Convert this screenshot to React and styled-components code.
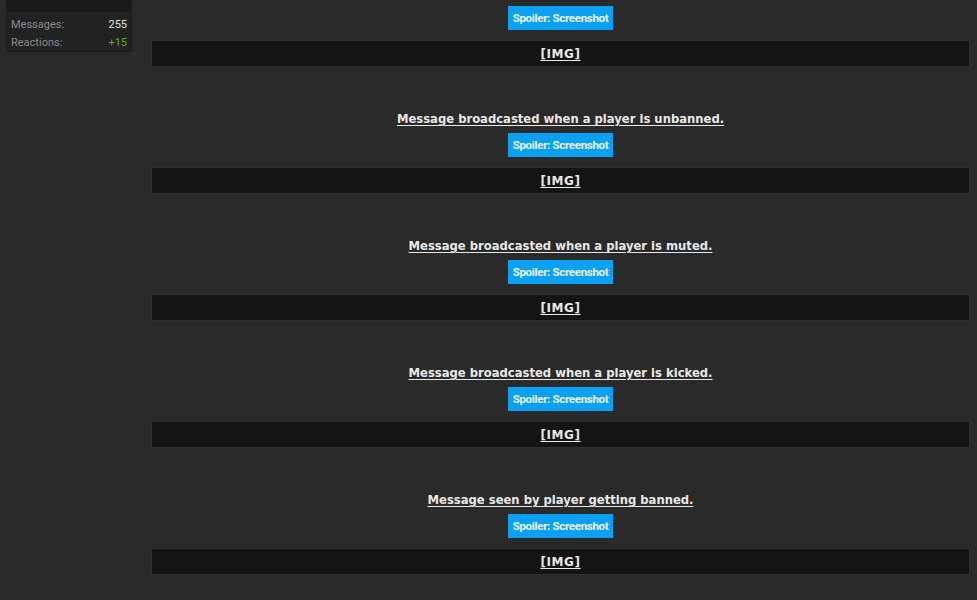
import React from "react";
import styled, { createGlobalStyle } from "styled-components";

const Global = createGlobalStyle`
  html, body { margin: 0; padding: 0; background: #2a2a2a; }
  body { font-family: "DejaVu Sans", Tahoma, Verdana, sans-serif; overflow: hidden; }
`;

const Page = styled.div`
  display: flex;
  align-items: flex-start;
  gap: 19px;
  padding: 0 7px 0 6px;
  width: 977px;
  height: 600px;
  box-sizing: border-box;
`;

const Sidebar = styled.aside`
  width: 126px;
  flex: 0 0 126px;
  background: #222222;
  border: 1px solid #1c1c1c;
  border-top: none;
  box-sizing: border-box;
`;

const AvatarStrip = styled.div`
  height: 12px;
  background: #181818;
`;

const Stats = styled.dl`
  margin: 0;
  padding: 3px 4px 0 4px;
  font-family: Roboto, "Liberation Sans", sans-serif;
  font-size: 11px;
`;

const StatRow = styled.div`
  display: flex;
  justify-content: space-between;
  align-items: center;
  height: 18px;
`;

const StatLabel = styled.dt`
  color: #8a8a8a;
`;

const StatValue = styled.dd`
  margin: 0;
  color: ${(p) => (p.$positive ? "#63a51e" : "#e2e2e2")};
`;

const Main = styled.main`
  flex: 1;
  display: flex;
  flex-direction: column;
  padding-top: 6px;
`;

const Section = styled.section`
  display: flex;
  flex-direction: column;
  align-items: center;
  margin-bottom: 43px;
`;

const Title = styled.a`
  display: block;
  height: 18px;
  line-height: 18px;
  margin-bottom: 5px;
  font-size: 11.6px;
  font-weight: bold;
  color: #e8e8e8;
  text-decoration: underline;
  text-underline-offset: 2px;
`;

const SpoilerButton = styled.button`
  display: block;
  height: 24px;
  padding: 0 5px;
  margin: 0;
  border: none;
  border-radius: 0;
  background: #0aa1f5;
  color: #eaf6ff;
  font-family: Roboto, "Liberation Sans", sans-serif;
  font-size: 11.5px;
  font-weight: bold;
  letter-spacing: -0.3px;
  cursor: pointer;
`;

const ImageBox = styled.div`
  align-self: stretch;
  margin-top: 10px;
  height: 27px;
  box-sizing: border-box;
  background: #141414;
  border: 1px solid #2f2f2f;
  display: flex;
  align-items: center;
  justify-content: center;
`;

const ImgLink = styled.a`
  font-size: 12px;
  font-weight: bold;
  letter-spacing: 0.6px;
  color: #e8e8e8;
  text-decoration: underline;
  text-underline-offset: 2px;
`;

const sections = [
  null,
  "Message broadcasted when a player is unbanned.",
  "Message broadcasted when a player is muted.",
  "Message broadcasted when a player is kicked.",
  "Message seen by player getting banned.",
];

export default function App() {
  return (
    <>
      <Global />
      <Page>
        <Sidebar>
          <AvatarStrip />
          <Stats>
            <StatRow>
              <StatLabel>Messages:</StatLabel>
              <StatValue>255</StatValue>
            </StatRow>
            <StatRow>
              <StatLabel>Reactions:</StatLabel>
              <StatValue $positive>+15</StatValue>
            </StatRow>
          </Stats>
        </Sidebar>
        <Main>
          {sections.map((t, i) => (
            <Section key={i}>
              {t && <Title>{t}</Title>}
              <SpoilerButton>Spoiler: Screenshot</SpoilerButton>
              <ImageBox>
                <ImgLink>[IMG]</ImgLink>
              </ImageBox>
            </Section>
          ))}
        </Main>
      </Page>
    </>
  );
}
